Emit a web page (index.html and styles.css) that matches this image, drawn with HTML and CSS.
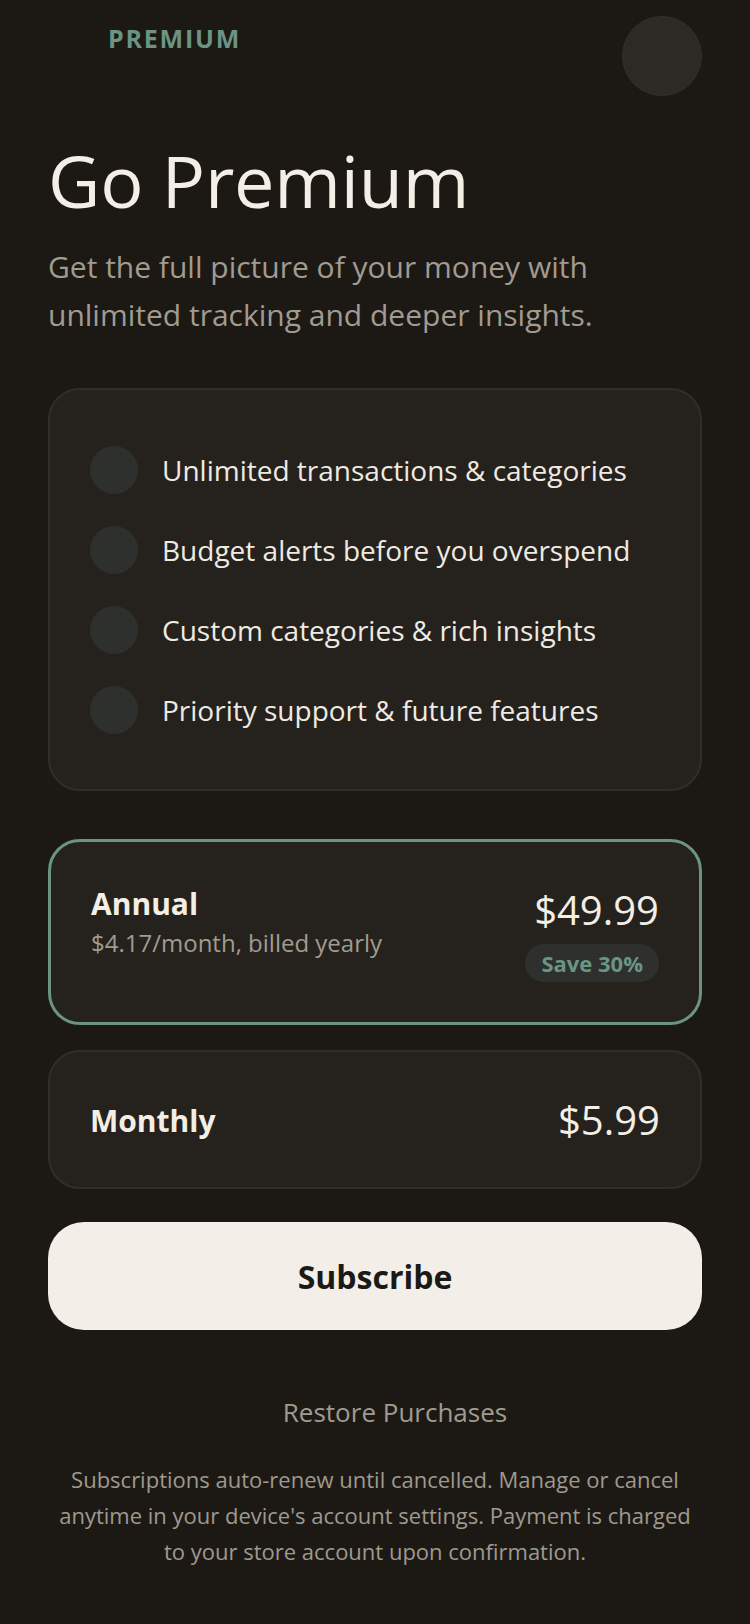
FILE: index.html
```html
<!DOCTYPE html>
<html lang="en">
<head>
<meta charset="utf-8">
<title>Go Premium</title>
<link rel="stylesheet" href="styles.css">
</head>
<body>
<main class="page">
  <header class="topbar">
    <span class="eyebrow">PREMIUM</span>
    <button class="close" aria-label="Close"></button>
  </header>

  <h1 class="title">Go Premium</h1>
  <p class="lead">Get the full picture of your money with unlimited tracking and deeper insights.</p>

  <section class="features">
    <div class="feature"><span class="dot"></span><span class="feature-text">Unlimited transactions &amp; categories</span></div>
    <div class="feature"><span class="dot"></span><span class="feature-text">Budget alerts before you overspend</span></div>
    <div class="feature"><span class="dot"></span><span class="feature-text">Custom categories &amp; rich insights</span></div>
    <div class="feature"><span class="dot"></span><span class="feature-text">Priority support &amp; future features</span></div>
  </section>

  <div class="plan plan-selected">
    <div class="plan-info">
      <div class="plan-name">Annual</div>
      <div class="plan-sub">$4.17/month, billed yearly</div>
    </div>
    <div class="plan-right">
      <div class="plan-price">$49.99</div>
      <span class="badge">Save 30%</span>
    </div>
  </div>

  <div class="plan plan-plain">
    <div class="plan-name">Monthly</div>
    <div class="plan-price">$5.99</div>
  </div>

  <button class="subscribe">Subscribe</button>

  <button class="restore">Restore Purchases</button>

  <p class="legal">Subscriptions auto-renew until cancelled. Manage or cancel anytime in your device's account settings. Payment is charged to your store account upon confirmation.</p>
</main>
</body>
</html>
```

FILE: styles.css
```css
* { box-sizing: border-box; }

html, body {
  margin: 0;
  padding: 0;
  background: #1c1915;
}

body {
  font-family: "Open Sans", "Noto Sans", sans-serif;
  color: #f3eee6;
  width: 750px;
  min-height: 1624px;
}

.page {
  padding: 16px 48px 0 48px;
  display: flex;
  flex-direction: column;
}

.topbar {
  display: flex;
  justify-content: space-between;
  align-items: flex-start;
  height: 80px;
}

.eyebrow {
  margin-left: 60px;
  margin-top: 4px;
  font-size: 25px;
  line-height: 36px;
  font-weight: 700;
  letter-spacing: 1.8px;
  color: #6b9484;
}

.close {
  width: 80px;
  height: 80px;
  border-radius: 50%;
  background: #2d2a25;
  border: 1px solid #332f2a;
  padding: 0;
}

.title {
  margin: 44px 0 0 0;
  font-size: 72px;
  line-height: 80px;
  font-weight: 400;
  letter-spacing: -0.2px;
  color: #f3eee6;
}

.lead {
  margin: 23px 0 0 0;
  font-size: 30px;
  line-height: 48px;
  color: #a19b90;
}

.features {
  margin-top: 49px;
  background: #25221e;
  border: 2px solid #312e29;
  border-radius: 32px;
  padding: 56px 40px 55px 40px;
  display: flex;
  flex-direction: column;
  gap: 32px;
}

.feature {
  display: flex;
  align-items: center;
  gap: 24px;
}

.dot {
  flex: none;
  width: 48px;
  height: 48px;
  border-radius: 50%;
  background: #2d302c;
}

.feature-text {
  font-size: 28px;
  line-height: 38px;
  color: #efeae2;
}

.plan {
  display: flex;
  justify-content: space-between;
  background: #25221e;
  border-radius: 32px;
}

.plan-selected {
  margin-top: 48px;
  border: 3px solid #6b9484;
  padding: 42px 40px 40px 40px;
  align-items: flex-start;
}

.plan-plain {
  margin-top: 25px;
  border: 2px solid #312e29;
  padding: 42px 40px 41px 40px;
  align-items: center;
}

.plan-name {
  font-size: 30px;
  line-height: 39px;
  font-weight: 700;
  color: #f3eee6;
}

.plan-sub {
  margin-top: 3px;
  font-size: 24px;
  line-height: 34px;
  color: #a19b90;
}

.plan-right {
  display: flex;
  flex-direction: column;
  align-items: flex-end;
}

.plan-price {
  font-size: 40px;
  line-height: 52px;
  font-weight: 400;
  color: #f3eee6;
}

.badge {
  margin-top: 8px;
  padding: 4px 16px;
  font-size: 22px;
  line-height: 30px;
  font-weight: 700;
  color: #6b9484;
  background: #2d302c;
  border-radius: 19px;
}

.subscribe {
  margin-top: 33px;
  height: 108px;
  border: none;
  border-radius: 36px;
  background: #f3efe8;
  color: #1c1a17;
  font-family: "Open Sans", "Noto Sans", sans-serif;
  font-size: 32px;
  font-weight: 700;
}

.restore {
  margin-top: 64px;
  align-self: center;
  background: none;
  border: none;
  padding: 0 0 0 40px;
  font-family: "Open Sans", "Noto Sans", sans-serif;
  font-size: 26px;
  line-height: 36px;
  color: #a19b90;
}

.legal {
  margin: 31px 0 0 0;
  text-align: center;
  font-size: 22px;
  line-height: 36px;
  color: #9f998e;
}
```
